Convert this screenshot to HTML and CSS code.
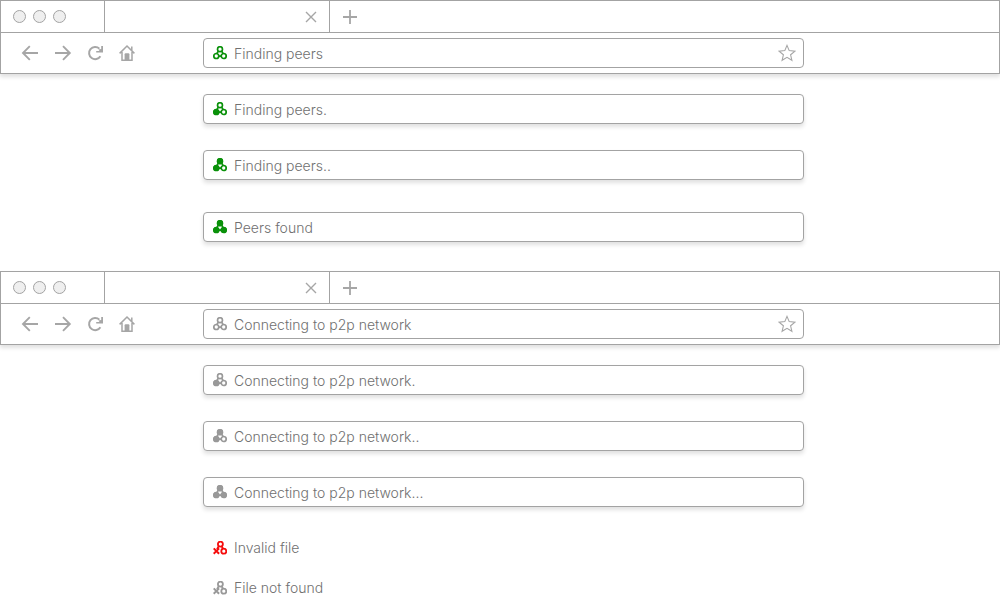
FILE: index.html
```
<!DOCTYPE html>
<html lang="en">
<head>
<meta charset="utf-8">
<meta name="viewport" content="width=device-width, initial-scale=1">
<title>Peer connection states</title>
<link rel="stylesheet" href="styles.css">
</head>
<body>
<svg class="sprite" aria-hidden="true">
  <symbol id="back" viewBox="0 0 16 16"><path d="M15 8H0M6.8 1.2 0 8l6.8 6.8" fill="none" stroke="currentColor" stroke-width="1.9"/></symbol>
  <symbol id="forward" viewBox="0 0 16 16"><path d="M0 8h15M8 1.2 14.8 8 8 14.8" fill="none" stroke="currentColor" stroke-width="1.9"/></symbol>
  <symbol id="reload" viewBox="0 0 16 16"><path d="M12.4 3.6A6.1 6.1 0 1 0 13.4 11.2" fill="none" stroke="currentColor" stroke-width="2"/><path d="M16 1v6.6H9.2V6.1h3.4L11.4 4.6l2.8-.6V1z" fill="currentColor"/></symbol>
  <symbol id="home" viewBox="0 0 16 16"><path d="M.6 8.4 8 1l7.4 7.4M3 7v8.2h10V7M12.8 5.6V1.4" fill="none" stroke="currentColor" stroke-width="1.5"/><path d="M5.6 15.4V9.2q0-1 1-1h2.8q1 0 1 1v6.2z" fill="currentColor"/></symbol>
  <symbol id="close" viewBox="0 0 12 12"><path d="m1 1 10 10M11 1 1 11" fill="none" stroke="currentColor" stroke-width="1.4"/></symbol>
  <symbol id="plus" viewBox="0 0 14 14"><path d="M7 0v14M0 7h14" fill="none" stroke="currentColor" stroke-width="1.8"/></symbol>
  <symbol id="star" viewBox="0 0 18 18"><path d="m9 1.4 2.2 5.2 5.7.5-4.3 3.7 1.3 5.5L9 13.4l-4.9 2.9 1.3-5.5L1.1 7.1l5.7-.5z" fill="none" stroke="currentColor" stroke-width="1.1"/></symbol>
  <symbol id="links" viewBox="0 0 14 14"><path d="M5.4 5 3.6 8.2M8.6 5l1.8 3.2M5.4 10.2h3.2" fill="none" stroke="currentColor" stroke-width="1.7"/></symbol>
  <symbol id="peers-0" viewBox="0 0 14 14"><use href="#links"/><g fill="none" stroke="currentColor" stroke-width="1.7"><circle cx="7" cy="3.2" r="2.5"/><circle cx="3.3" cy="10" r="2.5"/><circle cx="10.7" cy="10" r="2.5"/></g></symbol>
  <symbol id="peers-1" viewBox="0 0 14 14"><use href="#peers-0"/><circle cx="3.3" cy="10" r="3" fill="currentColor"/></symbol>
  <symbol id="peers-2" viewBox="0 0 14 14"><use href="#peers-1"/><circle cx="7" cy="3.2" r="3" fill="currentColor"/></symbol>
  <symbol id="peers-3" viewBox="0 0 14 14"><use href="#peers-2"/><circle cx="10.7" cy="10" r="3" fill="currentColor"/></symbol>
  <symbol id="peers-x" viewBox="0 0 14 14"><g fill="none" stroke="currentColor" stroke-width="1.8"><circle cx="7.4" cy="3.1" r="2.5"/><circle cx="10.8" cy="10.2" r="2.5"/><path d="M8.6 5l1.6 3.2M5.8 5 4 8.2"/><path d="m.7 7.4 5.4 5.4M6.1 7.4.7 12.8" stroke-width="2"/></g></symbol>
</svg>

<main class="states">
  <section class="group" aria-label="Finding peers">
    <div class="browser">
      <div class="tabs">
        <div class="lights"><span class="light"></span><span class="light"></span><span class="light"></span></div>
        <div class="tab"><button class="btn" aria-label="Close tab"><svg class="icon-close"><use href="#close"/></svg></button></div>
        <button class="btn new-tab" aria-label="New tab"><svg class="icon-plus"><use href="#plus"/></svg></button>
      </div>
      <div class="toolbar">
        <nav class="nav">
          <button class="btn" aria-label="Back"><svg class="icon-nav"><use href="#back" class="glyph"/></svg></button>
          <button class="btn" aria-label="Forward"><svg class="icon-nav"><use href="#forward"/></svg></button>
          <button class="btn" aria-label="Reload"><svg class="icon-nav"><use href="#reload"/></svg></button>
          <button class="btn" aria-label="Home"><svg class="icon-nav"><use href="#home"/></svg></button>
        </nav>
        <div class="field">
          <svg class="peers green" aria-hidden="true"><use href="#peers-0"/></svg>
          <input class="text" type="text" aria-label="Address" value="Finding peers">
          <button class="btn" aria-label="Bookmark"><svg class="icon-star"><use href="#star"/></svg></button>
        </div>
      </div>
    </div>
    <div class="list">
      <label class="field raised"><svg class="peers green" aria-hidden="true"><use href="#peers-1"/></svg><input class="text" type="text" aria-label="Address, step 1" value="Finding peers."></label>
      <label class="field raised"><svg class="peers green" aria-hidden="true"><use href="#peers-2"/></svg><input class="text" type="text" aria-label="Address, step 2" value="Finding peers.."></label>
      <label class="field raised final"><svg class="peers green" aria-hidden="true"><use href="#peers-3"/></svg><input class="text" type="text" aria-label="Address, found" value="Peers found"></label>
    </div>
  </section>

  <section class="group" aria-label="Connecting to network">
    <div class="browser">
      <div class="tabs">
        <div class="lights"><span class="light"></span><span class="light"></span><span class="light"></span></div>
        <div class="tab"><button class="btn" aria-label="Close tab"><svg class="icon-close"><use href="#close"/></svg></button></div>
        <button class="btn new-tab" aria-label="New tab"><svg class="icon-plus"><use href="#plus"/></svg></button>
      </div>
      <div class="toolbar">
        <nav class="nav">
          <button class="btn" aria-label="Back"><svg class="icon-nav"><use href="#back" class="glyph"/></svg></button>
          <button class="btn" aria-label="Forward"><svg class="icon-nav"><use href="#forward"/></svg></button>
          <button class="btn" aria-label="Reload"><svg class="icon-nav"><use href="#reload"/></svg></button>
          <button class="btn" aria-label="Home"><svg class="icon-nav"><use href="#home"/></svg></button>
        </nav>
        <div class="field">
          <svg class="peers" aria-hidden="true"><use href="#peers-0"/></svg>
          <input class="text" type="text" aria-label="Address" value="Connecting to p2p network">
          <button class="btn" aria-label="Bookmark"><svg class="icon-star"><use href="#star"/></svg></button>
        </div>
      </div>
    </div>
    <div class="list">
      <label class="field raised"><svg class="peers" aria-hidden="true"><use href="#peers-1"/></svg><input class="text" type="text" aria-label="Address, step 1" value="Connecting to p2p network."></label>
      <label class="field raised"><svg class="peers" aria-hidden="true"><use href="#peers-2"/></svg><input class="text" type="text" aria-label="Address, step 2" value="Connecting to p2p network.."></label>
      <label class="field raised"><svg class="peers" aria-hidden="true"><use href="#peers-3"/></svg><input class="text" type="text" aria-label="Address, step 3" value="Connecting to p2p network..."></label>
      <div class="messages">
        <p class="message"><svg class="peers red" aria-hidden="true"><use href="#peers-x"/></svg>Invalid file</p>
        <p class="message"><svg class="peers" aria-hidden="true"><use href="#peers-x"/></svg>File not found</p>
      </div>
    </div>
  </section>
</main>
</body>
</html>
```
FILE: styles.css
```
* { box-sizing: border-box; }

body {
  margin: 0;
  background: #fff;
  color: #707070;
  font: 300 14px/20px Inter, "Liberation Sans", sans-serif;
}

.sprite { display: none; }
.sprite symbol { overflow: visible; }

.states {
  display: flex;
  flex-direction: column;
  gap: 29px;
}

.browser {
  border: 1px solid #a3a3a3;
  box-shadow: 0 3px 4px rgba(0, 0, 0, 0.12);
}

.tabs {
  display: flex;
  height: 32px;
  border-bottom: 1px solid #a3a3a3;
}

.lights {
  display: flex;
  align-items: center;
  gap: 7px;
  width: 104px;
  padding-left: 12px;
  border-right: 1px solid #a3a3a3;
}

.light {
  width: 13px;
  height: 13px;
  border: 1px solid #a3a3a3;
  border-radius: 50%;
  background: #efefef;
}

.tab {
  display: flex;
  align-items: center;
  justify-content: flex-end;
  width: 225px;
  padding-right: 12px;
  border-right: 1px solid #a3a3a3;
}

.btn {
  display: flex;
  align-items: center;
  padding: 0;
  border: 0;
  background: none;
  color: #a6a6a6;
}

.new-tab { padding-left: 13px; }

.toolbar {
  display: grid;
  grid-template-columns: 202px 1fr 195px;
  align-items: center;
  height: 40px;
}

.nav {
  display: flex;
  gap: 16px;
  padding-left: 22px;
}

.icon-nav { width: 16px; height: 16px; overflow: visible; }
.icon-close { width: 12px; height: 12px; }
.icon-plus { width: 14px; height: 14px; }
.icon-star { width: 18px; height: 18px; }

.field {
  display: flex;
  align-items: center;
  height: 30px;
  padding: 0 7px 0 9px;
  border: 1px solid #a3a3a3;
  border-radius: 4px;
  background: #fff;
}

.raised { box-shadow: 0 3px 4px rgba(0, 0, 0, 0.12); }

.text {
  flex: 1;
  min-width: 0;
  padding: 2px 0 0;
  border: 0;
  outline: 0;
  background: none;
  color: inherit;
  font: inherit;
}

.peers {
  flex: none;
  width: 14px;
  height: 14px;
  margin-right: 7px;
  color: #999;
}

.green { color: #0a910a; }
.red { color: #f50d0d; }

.list {
  display: flex;
  flex-direction: column;
  gap: 26px;
  padding: 20px 196px 0 203px;
}

.final { margin-top: 6px; }

.messages {
  display: flex;
  flex-direction: column;
  gap: 20px;
  padding: 5px 0 0 10px;
}

.message {
  display: flex;
  align-items: center;
  margin: 0;
}
```
